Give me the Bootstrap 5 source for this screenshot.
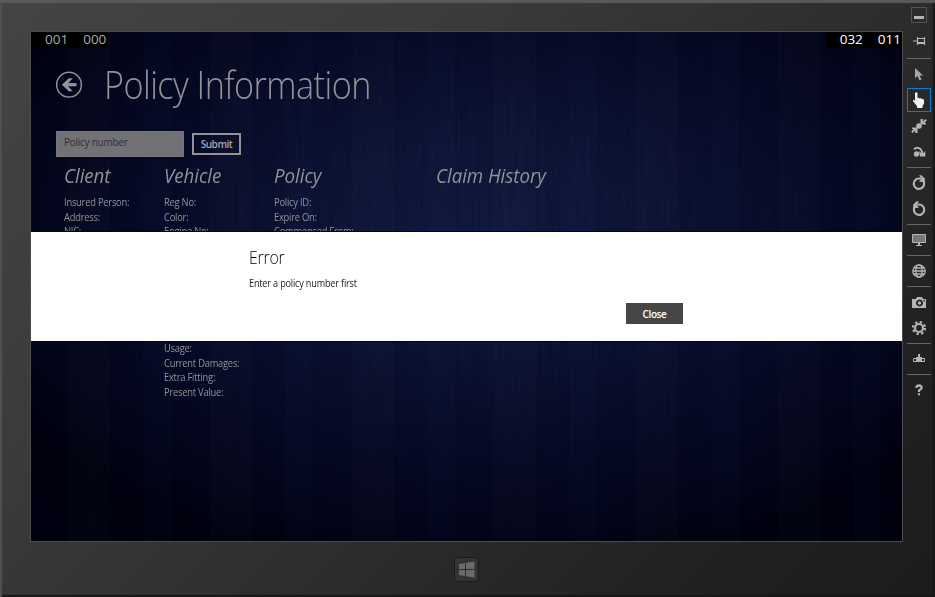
<!DOCTYPE html>
<html lang="en">
<head>
<meta charset="utf-8">
<meta name="viewport" content="width=device-width, initial-scale=1">
<title>Policy Information</title>
<link href="https://cdn.jsdelivr.net/npm/bootstrap@5.3.0/dist/css/bootstrap.min.css" rel="stylesheet">
<style>
body{width:935px;height:597px;font-family:"Open Sans","Noto Sans",sans-serif;overflow:hidden}
.device{width:935px;height:597px;background:linear-gradient(135deg,#444 0,#3b3b3b 30%,#2b2b2b 62%,#202020 85%,#1c1c1c 100%);box-shadow:inset 0 3px 1px #595959,inset 2px 0 1px #505050,inset -2px -2px 1px #141414}
.bezel{width:903px;padding:31px 0 0 30px}
.screen{width:873px;height:511px;border:1px solid #4a4a50;color:#929297;
background:repeating-linear-gradient(90deg,#0000 0 36px,#ffffff03 37px 79px,#00000018 80px 81px,#0000 82px 112px,#4060b006 113px 140px,#0002 141px 142px),
radial-gradient(ellipse 62% 66% at 52% 40%,#111b42 0,#0e1639 28%,#070b28 62%,#03051a 88%,#010210 100%)}
.grain{inset:0;width:100%;height:100%;opacity:.16}
.counter{top:0;height:16px;background:#000;font-size:13.5px;line-height:14px;white-space:pre}
.counter-l{left:0;width:76px;padding-left:14px;gap:15px;color:#aaa}
.counter-r{right:0;width:76px;padding-right:1px;gap:15px;color:#fff}
.page{padding:35px 0 0 25px}
.title{font-size:38px;font-weight:300;line-height:35px;letter-spacing:-.6px;margin:0 0 0 21px;color:#929297;white-space:nowrap;transform:scaleX(.9);transform-origin:left}
.search{padding-top:24px;height:51px}
.field{width:128px;height:26px;background:#717176;border:1px solid #77777c;border-radius:0;color:#303038;font-size:10px;letter-spacing:-.25px;line-height:15px;padding:1px 7px 6px}
.field::placeholder{color:#303038;opacity:1}
.submit{width:49px;height:22px;margin:2px 0 0 8px;border:2px solid #929297;border-radius:0;color:#a8a8ac;font-size:10px;font-weight:600;line-height:19px;padding:0;letter-spacing:-.45px}
.cols{padding:5px 0 0 8px;font-size:10.3px;line-height:14.6px;letter-spacing:-.24px;white-space:nowrap}
.cols h2{font-size:19.5px;font-style:italic;font-weight:400;line-height:26px;margin:0 0 6px;letter-spacing:-.05px;transform:scaleX(.96);transform-origin:left}
.cols p{margin:0;height:14.6px;transform:scaleX(.905);transform-origin:left}
.c-client{width:99.5px}.c-vehicle{width:110.5px}.c-policy{width:162px}
.dialog-band{left:0;right:0;top:200px;height:109px;background:#fff;color:#1b1b1b;padding:14px 0 0 218px;box-shadow:0 0 0 1px #02041a}
.dialog-band h1{font-size:17.5px;font-weight:350;line-height:23px;margin:0 0 8px;letter-spacing:-.2px;color:#000;transform:scaleX(.9);transform-origin:left}
.dialog-band p{font-size:10.2px;line-height:13px;margin:0 0 13px;letter-spacing:-.2px;transform:scaleX(.895);transform-origin:left}
.close-btn{width:57px;height:21px;margin-left:377px;background:#464646;border:0;border-radius:0;color:#fff;font-size:10px;font-weight:600;line-height:22px;padding:0;letter-spacing:-.4px}
.home{width:25px;height:25px;margin:15px 0 0 424px;border:1px solid #191919;border-radius:5px;background:radial-gradient(#262626,#3b3b3b)}
.tools{width:32px;padding:2px 0 0 4px;color:#b4b4b4}
.tool{width:24px;height:26px}
.tool svg,.home svg{display:block}
.boxed{width:16px;height:16px;border:1px solid #535353}
.active-tool{width:24px;height:24px;border:1px solid #0c7bd0}
.rule{width:24px;height:1px;background:#666;margin:2px 0}
.rule-wide{margin:4px 0 2px}
</style>
<script src="https://cdn.jsdelivr.net/npm/bootstrap@5.3.0/dist/js/bootstrap.bundle.min.js"></script>
</head>
<body>
<div class="device d-flex">
<div class="bezel">
<main class="screen position-relative overflow-hidden">
<svg class="grain position-absolute"><filter id="wood" color-interpolation-filters="sRGB"><feTurbulence type="fractalNoise" baseFrequency=".3 .02" numOctaves="3" seed="6"/><feColorMatrix values="0 0 0 0 0  0 0 0 0 0  0 0 0 0 .06  1.8 0 0 0 -.4"/></filter><rect width="100%" height="100%" filter="url(#wood)"/></svg>
<div class="counter counter-l position-absolute d-flex"><span>001</span><span>000</span></div>
<div class="counter counter-r position-absolute d-flex justify-content-end"><span>032</span><span>011</span></div>
<div class="page position-relative">
<header class="d-flex">
<svg width="27" height="40" viewBox="0 0 27 40" fill="none" stroke="#929297"><circle cx="13" cy="17.7" r="12.4" stroke-width="1.5"/><path d="M20.500 17.700H8" stroke-width="3.200"/><path d="M5.800 17.700l7-6.500h4l-6 6.500 6 6.500h-4z" fill="#929297" stroke="none"/></svg>
<h1 class="title">Policy Information</h1>
</header>
<div class="search d-flex align-items-start">
<input class="field" placeholder="Policy number" aria-label="Policy number">
<button class="btn submit">Submit</button>
</div>
<div class="cols d-flex">
<section class="c-client"><h2>Client</h2><p>Insured Person:</p><p>Address:</p><p>NIC:</p></section>
<section class="c-vehicle"><h2>Vehicle</h2><p>Reg No:</p><p>Color:</p><p>Engine No:</p><p></p><p></p><p></p><p></p><p></p><p></p><p></p><p>Usage:</p><p>Current Damages:</p><p>Extra Fitting:</p><p>Present Value:</p></section>
<section class="c-policy"><h2>Policy</h2><p>Policy ID:</p><p>Expire On:</p><p>Commenced From:</p></section>
<section><h2>Claim History</h2></section>
</div>
</div>
<div class="dialog-band position-absolute" role="dialog">
<h1>Error</h1><p>Enter a policy number first</p><button class="btn close-btn d-block">Close</button>
</div>
</main>
<div class="home d-flex align-items-center justify-content-center"><svg width="17" height="17" fill="#6a6a6a"><path d="M1 3l6-1v6H1zM8 1.8l8.500-1.300V8H8zM1 9h6v6l-6-1zM8 9h8.500v7.500L8 15.200z"/></svg></div>
</div>
<aside class="tools d-flex flex-column">
<div class="tool d-flex align-items-center justify-content-center"><div class="boxed"><svg width="14" height="14" fill="currentColor"><path d="M2 8h10v3H2z"/></svg></div></div>
<div class="tool d-flex align-items-center justify-content-center"><svg width="14" height="12" fill="none" stroke="currentColor"><path d="M1 6h4M5.500 2v8M12.500 2v8M6 3.500h6M6 7.500h6M6 8.500h6" stroke-width="1.200"/></svg></div>
<div class="rule rule-wide"></div>
<div class="tool d-flex align-items-center justify-content-center"><svg width="12" height="16" fill="#a8a8a8"><path d="M2 2v10l2.500-2 2 4.500 2-1-2-4H10z"/></svg></div>
<div class="tool d-flex align-items-center justify-content-center"><div class="active-tool d-flex align-items-center justify-content-center"><svg width="16" height="18" viewBox="0 0 16 18" fill="#f2f2f2"><path d="M4 2q1.500-1.500 2.500 0v5q1.500-.8 2.200.5 1.500-.8 2.200.5 1.700-.5 2.100 1v3.500L11.500 15v2H6v-2L2.200 10.500q-.7-2 .8-1.700L4 10z"/></svg></div></div>
<div class="tool d-flex align-items-center justify-content-center"><svg width="16" height="18" viewBox="0 0 16 18" fill="currentColor"><circle cx="8" cy="9" r="2.800"/><path d="M9.500 2v5.500H15V6h-1.700l2.500-2.500-1.400-1.600-2.600 2.600V2zM6.500 16v-5.500H1V12h1.700L.2 14.500l1.400 1.600 2.600-2.600V16z"/></svg></div>
<div class="tool d-flex align-items-center justify-content-center"><svg width="14" height="14" viewBox="0 0 14 14"><circle cx="4.500" cy="9" r="2.700" fill="currentColor"/><path d="M2 4.500C4.500 1.200 10 2.500 10.300 9" fill="none" stroke="currentColor" stroke-width="1.900"/><path d="M7 6l3.300 3 3-3v5.500H8z" fill="currentColor"/></svg></div>
<div class="rule"></div>
<div class="tool d-flex align-items-center justify-content-center"><svg width="16" height="16" viewBox="0 0 16 16"><path d="M12.400 6a5.200 5.200 0 1 1-4.400-2.500h2" fill="none" stroke="currentColor" stroke-width="2.200"/><path d="M8 .3h2.500l3.200 3.200-3.200 3.200H8l2.500-3.200zM13.800 3v4H10z" fill="currentColor"/></svg></div>
<div class="tool d-flex align-items-center justify-content-center"><svg width="16" height="16" viewBox="0 0 16 16"><path d="M3.600 6a5.200 5.200 0 1 0 4.400-2.500H6" fill="none" stroke="currentColor" stroke-width="2.200"/><path d="M8 .3H5.500L2.300 3.500l3.200 3.200H8L5.500 3.500zM2.200 3v4H6z" fill="currentColor"/></svg></div>
<div class="rule"></div>
<div class="tool d-flex align-items-center justify-content-center"><svg width="16" height="16"><path d="M1.500 2.500h13v8h-13z" fill="#777" stroke="currentColor"/><path d="M7 11h2v2h2v1H5v-1h2z" fill="currentColor"/></svg></div>
<div class="rule"></div>
<div class="tool d-flex align-items-center justify-content-center"><svg width="16" height="16" fill="none" stroke="currentColor" stroke-width="1.300"><circle cx="8" cy="8" r="6.200"/><ellipse cx="8" cy="8" rx="3.200" ry="6.200"/><path d="M2 8h12M3 5h10M3 11h10"/></svg></div>
<div class="rule"></div>
<div class="tool d-flex align-items-center justify-content-center"><svg width="16" height="14"><path fill="currentColor" fill-rule="evenodd" d="M1 4h4l1-2h5l1 2h3v9H1zM8.500 4.500a3.500 3.500 0 1 0 .01 0zM8.500 6.300a1.700 1.700 0 1 1-.01 0zM12.500 5v1.500H14V5z"/></svg></div>
<div class="tool d-flex align-items-center justify-content-center"><svg width="16" height="16" fill="none" stroke="currentColor"><circle cx="8" cy="8" r="4" stroke-width="2.200"/><circle cx="8" cy="8" r="6" stroke-width="2.200" stroke-dasharray="2.360"/></svg></div>
<div class="rule"></div>
<div class="tool d-flex align-items-center justify-content-center"><svg width="14" height="12"><path d="M1.500 5.500h11v3h-11z" fill="none" stroke="currentColor"/><path d="M6 1h2v3h2v5H4V4h2z" fill="currentColor"/></svg></div>
<div class="rule"></div>
<div class="tool d-flex align-items-center justify-content-center"><svg width="12" height="14"><path d="M3.500 5V3.500Q6 1.500 8.500 3.500v2L6 7.500v1.500M6 10.200v2" fill="none" stroke="currentColor" stroke-width="2.200"/></svg></div>
</aside>
</div>
</body>
</html>
